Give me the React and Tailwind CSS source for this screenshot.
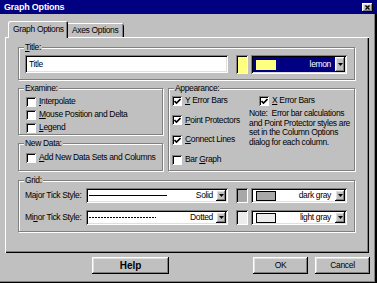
import React from 'react';

const raised = 'shadow-[inset_-1px_-1px_0_#000,inset_1px_1px_0_#fff,inset_-2px_-2px_0_#808080,inset_2px_2px_0_#dfdfdf]';
const sunken = 'shadow-[inset_1px_1px_0_#808080,inset_-1px_-1px_0_#fff,inset_2px_2px_0_#000,inset_-2px_-2px_0_#dfdfdf]';
const boxSunken = 'shadow-[inset_1px_1px_0_#808080,inset_-1px_-1px_0_#fff,inset_2px_2px_0_#000]';

function U({ pre = '', u, post = '' }) {
  return (
    <span>
      {pre}
      <span className="underline underline-offset-[1px]">{u}</span>
      {post}
    </span>
  );
}

function Group({ label, className = '', children }) {
  return (
    <div className={`relative border border-[#808080] shadow-[inset_1px_1px_0_#fff,1px_1px_0_#fff] ${className}`}>
      <span className="absolute left-[5px] top-[-6px] bg-[#c0c0c0] px-[1px] leading-[11px] whitespace-nowrap">{label}</span>
      {children}
    </div>
  );
}

function Check({ checked, children, className = '' }) {
  return (
    <div className={`flex items-center h-[13px] gap-[3px] whitespace-nowrap ${className}`}>
      <span className={`w-[10px] h-[10px] shrink-0 bg-white flex items-center justify-center ${boxSunken}`}>
        {checked && (
          <svg width="7" height="7" viewBox="0 0 7 7" className="ml-[1px] mt-[1px]">
            <path d="M0.5 3 L2.5 5 L6.5 1" stroke="#000" strokeWidth="1.6" fill="none" />
          </svg>
        )}
      </span>
      <span className="leading-[11px]">{children}</span>
    </div>
  );
}

function Arrow() {
  return (
    <div className={`w-[10px] h-full shrink-0 bg-[#c0c0c0] flex items-center justify-center ${raised}`}>
      <svg width="5" height="3" viewBox="0 0 5 3">
        <path d="M0 0 H5 L2.5 3 Z" fill="#000" />
      </svg>
    </div>
  );
}

function Swatch({ color, className = '' }) {
  return <div className={`w-[12px] shrink-0 ${boxSunken} ${color} ${className}`} />;
}

function ColorCombo({ swatch, name, selected, className = '' }) {
  return (
    <div className={`w-[96px] flex items-center p-[2px] bg-white ${sunken} ${className}`}>
      <div className={`flex-1 h-full flex items-center pl-[3px] pr-[4px] ${selected ? 'bg-[#000080] text-white' : ''}`}>
        <div className={`w-[20px] h-[10px] ${swatch} ${selected ? '' : 'border border-[#000]'}`} />
        <span className="ml-auto leading-[11px] whitespace-nowrap">{name}</span>
      </div>
      <Arrow />
    </div>
  );
}

function StyleCombo({ dotted, name }) {
  return (
    <div className={`w-[142px] h-[15px] flex items-center p-[2px] bg-white ${sunken}`}>
      <div className="flex-1 h-full flex items-center pl-[1px] pr-[3px]">
        {dotted ? (
          <div className="w-[67px] h-[1px] bg-[repeating-linear-gradient(90deg,#000_0_2px,transparent_2px_3px)]" />
        ) : (
          <div className="w-[78px] h-[1px] bg-black" />
        )}
        <span className="ml-auto leading-[11px]">{name}</span>
      </div>
      <Arrow />
    </div>
  );
}

export default function App() {
  return (
    <div className="w-[377px] h-[283px] overflow-hidden bg-[#c0c0c0] text-black text-[8.5px] tracking-[-0.35px] font-['Liberation_Sans',Arial,sans-serif] shadow-[inset_-2px_-1px_0_#000,inset_-3px_-2px_0_#808080]">
      {/* title bar */}
      <div className="h-[14px] bg-[#000080] flex items-center justify-between pl-[4px] pr-[4px]">
        <span className="text-white font-bold text-[9px] tracking-[-0.2px] leading-none">Graph Options</span>
        <div className={`w-[11px] h-[9px] bg-[#c0c0c0] flex items-center justify-center ${raised}`}>
          <svg width="5" height="5" viewBox="0 0 5 5">
            <path d="M0.5 0.5 L4.5 4.5 M4.5 0.5 L0.5 4.5" stroke="#000" strokeWidth="1.3" />
          </svg>
        </div>
      </div>

      {/* tabs */}
      <div className="h-[23px] flex items-end pl-[8px] whitespace-nowrap">
        <div className="relative z-10 -mb-[1px] w-[60px] h-[17px] bg-[#c0c0c0] rounded-t-[2px] shadow-[inset_1px_1px_0_#fff,inset_-1px_0_0_#000,inset_-2px_0_0_#808080] flex items-center pl-[5px] pb-[1px]">
          <span className="leading-none">Graph Options</span>
        </div>
        <div className="w-[56px] h-[14px] bg-[#c0c0c0] rounded-tr-[2px] shadow-[inset_0_1px_0_#fff,inset_-1px_0_0_#000,inset_-2px_0_0_#808080] flex items-center pl-[4px]">
          <span className="leading-none">Axes Options</span>
        </div>
      </div>

      {/* tab panel */}
      <div className="ml-[5px] w-[364px] h-[216px] pl-[13px] pt-[10px] shadow-[inset_1px_1px_0_#fff,inset_-1px_-1px_0_#000,inset_-2px_-2px_0_#808080]">
        <Group label={<U u="T" post="itle:" />} className="w-[337px] h-[33px] pl-[6px] pt-[7px]">
          <div className="flex h-[19px]">
            <div className={`w-[203px] h-[18px] bg-white flex items-center pl-[4px] ${sunken}`}>
              <span className="leading-none">Title</span>
            </div>
            <Swatch color="bg-[#ffff80]" className="ml-[8px]" />
            <ColorCombo swatch="bg-[#ffff80]" name="lemon" selected className="ml-[3px] h-[19px]" />
          </div>
        </Group>

        <div className="flex mt-[8px] h-[83px]">
          <div className="w-[145px] flex flex-col">
            <Group label="Examine:" className="h-[47px] pl-[7px] pt-[6px]">
              <Check><U u="I" post="nterpolate" /></Check>
              <Check><U u="M" post="ouse Position and Delta" /></Check>
              <Check><U u="L" post="egend" /></Check>
            </Group>
            <Group label="New Data:" className="h-[28px] mt-[8px] pl-[7px] pt-[7px]">
              <Check><U u="A" post="dd New Data Sets and Columns" /></Check>
            </Group>
          </div>

          <Group label="Appearance:" className="w-[187px] ml-[5px] h-[83px] flex pl-[3px] pt-[5px]">
            <div className="w-[77px] flex flex-col gap-[6.7px]">
              <Check checked><U u="Y" post=" Error Bars" /></Check>
              <Check checked><U u="P" post="oint Protectors" /></Check>
              <Check checked><U u="C" post="onnect Lines" /></Check>
              <Check><U pre="Bar " u="G" post="raph" /></Check>
            </div>
            <div className="flex-1 flex flex-col">
              <Check checked className="ml-[10px]"><U u="X" post=" Error Bars" /></Check>
              <p className="mt-[2px] leading-[9.7px] whitespace-nowrap">
                Note:&nbsp; Error bar calculations<br />
                and Point Protector styles are<br />
                set in the Column Options<br />
                dialog for each column.
              </p>
            </div>
          </Group>
        </div>

        <Group label="Grid:" className="w-[337px] h-[52px] mt-[9px] pl-[6px] pt-[7px]">
          <div className="flex h-[15px] items-center">
            <span className="w-[61px] leading-none whitespace-nowrap">Major Tick Style:</span>
            <StyleCombo name="Solid" />
            <Swatch color="bg-[#a8a8a8]" className="ml-[8px] h-[15px]" />
            <ColorCombo swatch="bg-[#a8a8a8]" name="dark gray" className="ml-[3px] h-[15px]" />
          </div>
          <div className="flex h-[15px] items-center mt-[7px]">
            <span className="w-[61px] leading-none whitespace-nowrap"><U pre="Mi" u="n" post="or Tick Style:" /></span>
            <StyleCombo dotted name="Dotted" />
            <Swatch color="bg-[#ececec]" className="ml-[8px] h-[15px]" />
            <ColorCombo swatch="bg-[#ececec]" name="light gray" className="ml-[3px] h-[15px]" />
          </div>
        </Group>
      </div>

      {/* buttons */}
      <div className="flex mt-[4px] h-[17px]">
        <button className={`ml-[92px] w-[77px] h-[17px] bg-[#c0c0c0] font-bold text-[10px] tracking-normal leading-none ${raised}`}>Help</button>
        <button className={`ml-[84px] w-[55px] h-[17px] bg-[#c0c0c0] leading-none ${raised}`}>OK</button>
        <button className={`ml-[7px] w-[55px] h-[17px] bg-[#c0c0c0] leading-none ${raised}`}>Cancel</button>
      </div>
    </div>
  );
}
